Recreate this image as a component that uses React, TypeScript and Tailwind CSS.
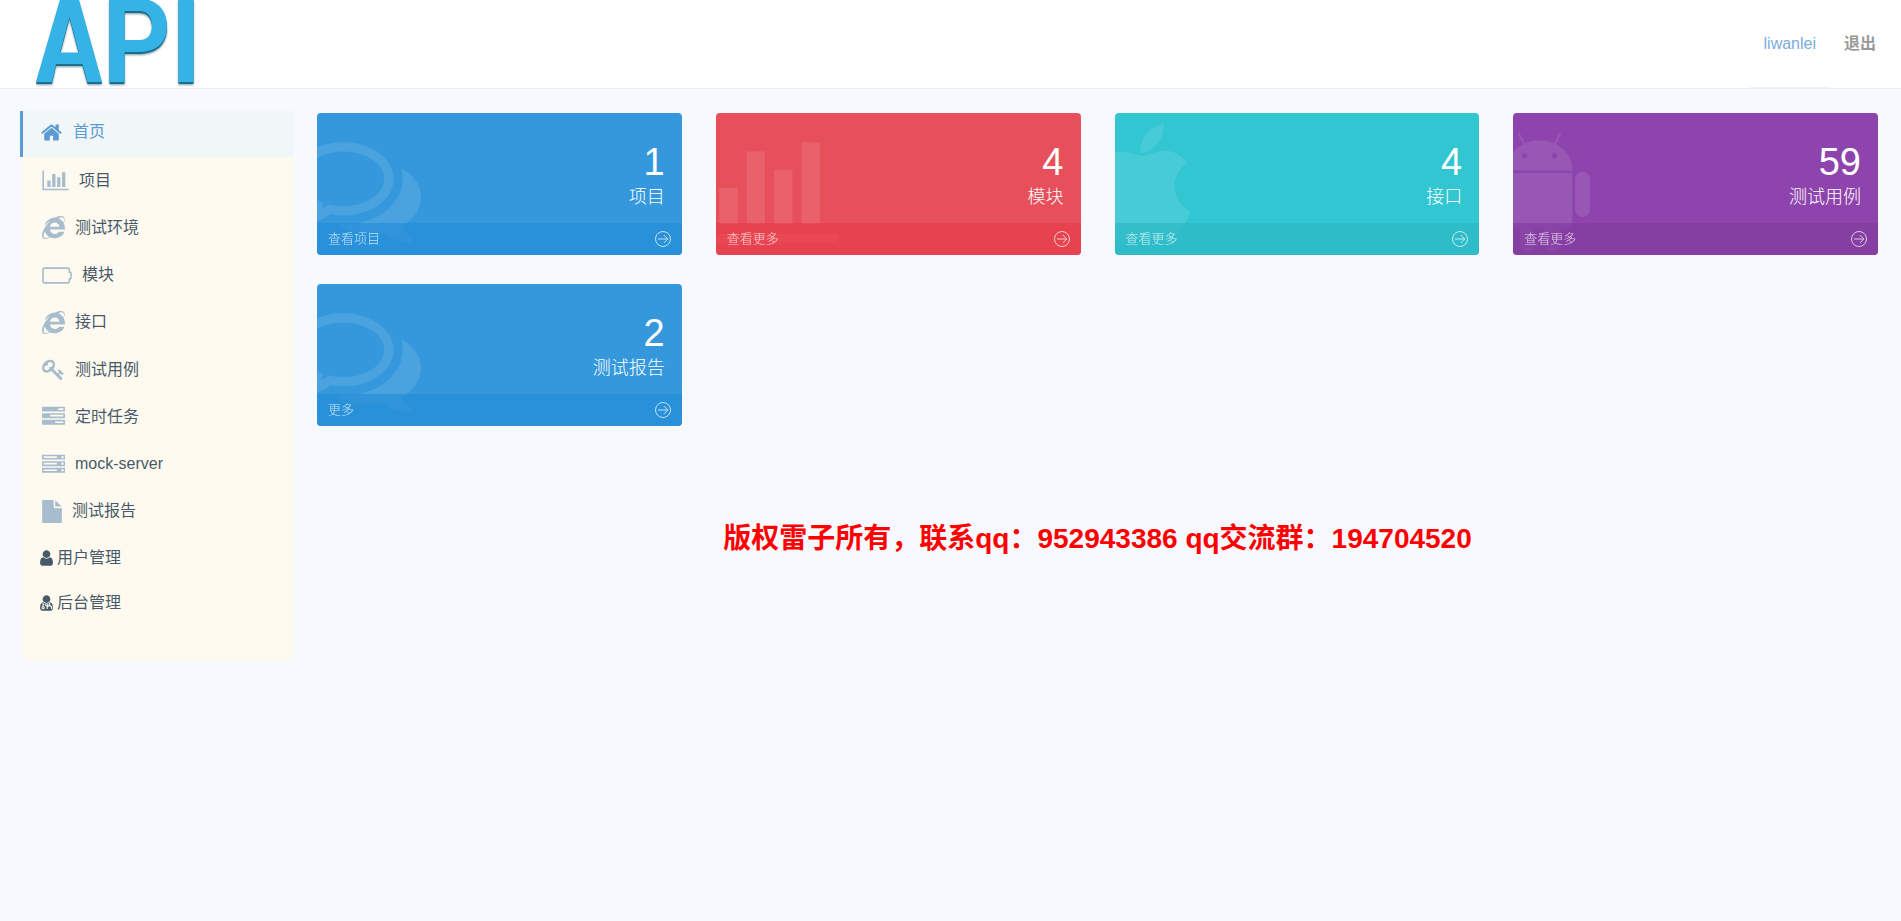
import type { ReactNode } from "react";
import { FaInternetExplorer } from "react-icons/fa";

type GlyphProps = { d: string; box: string; className: string };

function Glyph({ d, box, className }: GlyphProps) {
  return (
    <svg viewBox={box} className={className} fill="currentColor" aria-hidden="true">
      <path d={d} />
    </svg>
  );
}

const paths = {
  home: "M1472 992v480q0 26-19 45t-45 19h-384v-384h-256v384h-384q-26 0-45-19t-19-45v-480q0-1 .5-3t.5-3l575-474 575 474q1 2 1 6zm223-69l-62 74q-8 9-21 11h-3q-13 0-21-7l-692-577-692 577q-12 8-24 7-13-2-21-11l-62-74q-8-10-7-23.5t11-21.5l719-599q32-26 76-26t76 26l244 204v-195q0-14 9-23t23-9h192q14 0 23 9t9 23v408l219 182q10 8 11 21.5t-7 23.5z",
  chart: "M640 896v512h-256v-512h256zm384-512v1024h-256v-1024h256zm1024 1152v128h-2048v-1536h128v1408h1920zm-640-896v768h-256v-768h256zm384-384v1152h-256v-1152h256z",
  battery: "M2176 576q53 0 90.5 37.5t37.5 90.5v384q0 53-37.5 90.5t-90.5 37.5v160q0 66-47 113t-113 47h-1856q-66 0-113-47t-47-113v-960q0-66 47-113t113-47h1856q66 0 113 47t47 113v160zm0 512v-384h-128v-288q0-14-9-23t-23-9h-1856q-14 0-23 9t-9 23v960q0 14 9 23t23 9h1856q14 0 23-9t9-23v-288h128z",
  key: "M832 512q0-80-56-136t-136-56-136 56-56 136q0 42 19 83-41-19-83-19-80 0-136 56t-56 136 56 136 136 56 136-56 56-136q0-42-19-83 41 19 83 19 80 0 136-56t56-136zm851 704q0 17-49 66t-66 49q-9 0-28.5-16t-36.5-33-38.5-40-24.5-26l-96 96 220 220q28 28 28 68 0 42-39 81t-81 39q-40 0-68-28l-671-671q-176 131-365 131-163 0-265.5-102.5t-102.5-265.5q0-160 95-313t248-248 313-95q163 0 265.5 102.5t102.5 265.5q0 189-131 365l355 355 96-96q-3-3-26-24.5t-40-38.5-33-36.5-16-28.5q0-17 49-66t66-49q13 0 23 10 6 6 46 44.5t82 79.5 86.5 86 73 78 28.5 41z",
  tasks: "M1024 1408h640v-128h-640v128zm-384-512h1024v-128h-1024v128zm640-512h384v-128h-384v128zm512 832v256q0 26-19 45t-45 19h-1664q-26 0-45-19t-19-45v-256q0-26 19-45t45-19h1664q26 0 45 19t19 45zm0-512v256q0 26-19 45t-45 19h-1664q-26 0-45-19t-19-45v-256q0-26 19-45t45-19h1664q26 0 45 19t19 45zm0-512v256q0 26-19 45t-45 19h-1664q-26 0-45-19t-19-45v-256q0-26 19-45t45-19h1664q26 0 45 19t19 45z",
  server: "M128 1408h1024v-128h-1024v128zm0-512h1024v-128h-1024v128zm1568 448q0-40-28-68t-68-28-68 28-28 68 28 68 68 28 68-28 28-68zm-1568-960h1024v-128h-1024v128zm1568 448q0-40-28-68t-68-28-68 28-28 68 28 68 68 28 68-28 28-68zm0-512q0-40-28-68t-68-28-68 28-28 68 28 68 68 28 68-28 28-68zm96 832v384h-1792v-384h1792zm0-512v384h-1792v-384h1792zm0-512v384h-1792v-384h1792z",
  file: "M1152 512v-472q22 14 36 28l408 408q14 14 28 36h-472zm-128 32q0 40 28 68t68 28h544v1056q0 40-28 68t-68 28h-1344q-40 0-68-28t-28-68v-1600q0-40 28-68t68-28h800v544z",
  user: "M1536 1399q0 109-62.5 187t-150.5 78h-854q-88 0-150.5-78t-62.5-187q0-85 8.5-160.5t31.5-152 58.5-131 94-89 134.5-34.5q131 128 313 128t313-128q76 0 134.5 34.5t94 89 58.5 131 31.5 152 8.5 160.5zm-256-887q0 159-112.5 271.5t-271.5 112.5-271.5-112.5-112.5-271.5 112.5-271.5 271.5-112.5 271.5 112.5 112.5 271.5z",
  comments: "M704 384q-153 0-286 52t-211.5 141-78.5 191q0 82 53 158t149 132l97 56-35 84q34-20 62-39l44-31 53 10q78 14 153 14 153 0 286-52t211.5-141 78.5-191-78.5-191-211.5-141-286-52zm0-128q191 0 353.5 68.5t256.5 186.5 94 257-94 257-256.5 186.5-353.5 68.5q-86 0-176-16-124 88-278 128-36 9-86 16h-3q-11 0-20.5-8t-11.5-21q-1-3-1-6.5t.5-6.5 2-6l2.5-5 3.5-5.5 4-5 4.5-5 4-4.5q5-6 23-25t26-29.5 22.5-29 25-38.5 20.5-44q-124-72-195-177t-71-224q0-139 94-257t256.5-186.5 353.5-68.5zm822 1169q10 24 20.5 44t25 38.5 22.5 29 26 29.5 23 25q1 1 4 4.5t4.5 5 4 5 3.5 5.5l2.5 5 2 6 .5 6.5-1 6.5q-3 14-13 22t-22 7q-50-7-86-16-154-40-278-128-90 16-176 16-271 0-472-132 58 4 88 4 161 0 309-45t264-129q125-92 192-212t67-254q0-77-23-152 129 71 204 178t75 230q0 120-71 224.5t-195 176.5z",
  apple: "M1585 1215q-39 125-123 250-129 196-257 196-49 0-140-32-86-32-151-32-61 0-142 33-81 34-132 34-152 0-301-259-147-261-147-503 0-228 113-374 113-144 284-144 72 0 177 30 104 30 138 30 45 0 143-34 102-34 173-34 119 0 213 65 52 36 104 100-79 67-114 118-65 94-65 207 0 124 69 223t158 126zm-376-1173q0 61-29 136-30 75-93 138-54 54-108 72-37 11-104 17 3-149 78-257 74-107 250-148 1 3 2.5 11t2.5 11q0 4 .5 10t.5 10z",
  android: "M685 483q16 0 27.5-11.5t11.5-27.5-11.5-27.5-27.5-11.5-27 11.5-11 27.5 11 27.5 27 11.5zm422 0q16 0 27-11.5t11-27.5-11-27.5-27-11.5-27.5 11.5-11.5 27.5 11.5 27.5 27.5 11.5zm-812 184q42 0 72 30t30 72v430q0 43-29.5 73t-72.5 30-73-30-30-73v-430q0-42 30-72t73-30zm1060 19v666q0 46-32 78t-77 32h-75v227q0 43-30 73t-73 30-73-30-30-73v-227h-138v227q0 43-30 73t-73 30q-42 0-72-30t-30-73l-1-227h-74q-46 0-78-32t-32-78v-666h918zm-232-405q107 55 171 153.5t64 215.5h-925q0-117 64-215.5t172-153.5l-71-131q-7-13 5-20 13-6 20 6l72 132q95-42 201-42t201 42l72-132q7-12 20-6 12 7 5 20zm477 488v430q0 43-30 73t-73 30q-42 0-72-30t-30-73v-430q0-43 30-72.5t72-29.5q43 0 73 29.5t30 72.5z",
};

function DoctorGlyph() {
  return (
    <svg viewBox="256 0 1280 1792" className="h-[18px] w-[13px]" aria-hidden="true">
      <path fill="currentColor" d={paths.user} />
      <g fill="none" stroke="#fffaf0" strokeWidth="110">
        <path d="M560 900v320M1200 900v220M960 1500v-130q0-210 220-210t220 210v130M720 1000l176 160 176-160" />
        <circle cx="560" cy="1360" r="110" />
      </g>
    </svg>
  );
}

const menu: { label: string; icon: ReactNode }[] = [
  { label: "项目", icon: <Glyph d={paths.chart} box="0 0 2048 1792" className="h-[23px] w-[27px]" /> },
  { label: "测试环境", icon: <FaInternetExplorer className="size-[23px]" /> },
  { label: "模块", icon: <Glyph d={paths.battery} box="0 0 2304 1792" className="h-[23px] w-[30px]" /> },
  { label: "接口", icon: <FaInternetExplorer className="size-[23px]" /> },
  { label: "测试用例", icon: <Glyph d={paths.key} box="0 0 1792 1792" className="size-[23px]" /> },
  { label: "定时任务", icon: <Glyph d={paths.tasks} box="0 0 1792 1792" className="size-[23px]" /> },
  { label: "mock-server", icon: <Glyph d={paths.server} box="0 0 1792 1792" className="size-[23px]" /> },
  { label: "测试报告", icon: <Glyph d={paths.file} box="128 0 1536 1792" className="h-[23px] w-5" /> },
];

const cards = [
  { value: 1, label: "项目", more: "查看项目", color: "bg-[#3598dc]", foot: "bg-[#258fd7]", icon: paths.comments, box: "0 0 1792 1792", size: "w-32" },
  { value: 4, label: "模块", more: "查看更多", color: "bg-[#e7505a]", foot: "bg-[#e73d4a]", icon: paths.chart, box: "0 0 2048 1792", size: "w-[146px]" },
  { value: 4, label: "接口", more: "查看更多", color: "bg-[#32c5d2]", foot: "bg-[#2bb8c4]", icon: paths.apple, box: "192 0 1408 1792", size: "w-[101px]" },
  { value: 59, label: "测试用例", more: "查看更多", color: "bg-[#8e44ad]", foot: "bg-[#823e9e]", icon: paths.android, box: "192 0 1408 1792", size: "w-[101px]" },
  { value: 2, label: "测试报告", more: "更多", color: "bg-[#3598dc]", foot: "bg-[#258fd7]", icon: paths.comments, box: "0 0 1792 1792", size: "w-32" },
];

function StatCard({ card }: { card: (typeof cards)[number] }) {
  return (
    <a href="#" className={`relative block overflow-hidden rounded-[4px] text-white ${card.color}`}>
      <Glyph d={card.icon} box={card.box} className={`absolute top-[11px] -left-6 h-32 opacity-10 ${card.size}`} />
      <div className="flex h-[110px] flex-col items-end pt-[31px] pr-[17px]">
        <span className="text-[38px] leading-9">{card.value}</span>
        <span className="text-lg leading-[34px] font-light">{card.label}</span>
      </div>
      <div className={`relative flex h-8 items-center justify-between px-[11px] text-[13px] font-light opacity-70 ${card.foot}`}>
        <span>{card.more}</span>
        <svg viewBox="0 0 16 16" className="size-4" fill="none" stroke="currentColor" aria-hidden="true">
          <circle cx="8" cy="8" r="7.5" />
          <path d="M3 8h9.5M8.8 4l4 4-4 4" />
        </svg>
      </div>
    </a>
  );
}

function LogoShapes() {
  return (
    <>
      <path d="M24.500-2H42.500L66 82H51.500L46.500 64H20L16 82H0ZM33.500 17 24 52.500H43Z" />
      <path d="M73.500-2H100C120-2 131 9 131 26S120 52 103 52H88.500V82H73.500ZM88.500 11V40H103C112 40 116 34 116 25.500S112 11 103 11Z" />
      <path d="M142.500-2H157.500V82H142.500Z" />
    </>
  );
}

function Logo() {
  return (
    <svg viewBox="0 0 160 88" className="h-[88px] w-40" role="img" aria-label="API">
      <defs>
        <filter id="soft" x="-5%" y="-5%" width="110%" height="115%">
          <feGaussianBlur stdDeviation="0.900" />
        </filter>
      </defs>
      <g fillRule="evenodd">
        <g fill="#7f9aa5" transform="translate(0 3)" filter="url(#soft)">
          <LogoShapes />
        </g>
        <g fill="#1c6f8c" transform="translate(0 2)">
          <LogoShapes />
        </g>
        <g fill="#35b3e6">
          <LogoShapes />
        </g>
      </g>
    </svg>
  );
}

export default function App() {
  return (
    <div className="min-h-screen bg-[#f8f9ff] font-['Liberation_Sans','Noto_Sans_CJK_SC',sans-serif] text-base text-[#485a6a]">
      <header className="flex items-start justify-between border-b border-[#e7ebf3] bg-white pr-[25px] pl-9">
        <a href="#"><Logo /></a>
        <nav className="flex h-[88px] items-center">
          <a href="#" className="flex h-[88px] items-center border-b border-[#eff2f8] px-3.5 text-[#7cacdc]">liwanlei</a>
          <a href="#" className="pl-3.5 font-bold text-[#999]">退出</a>
        </nav>
      </header>

      <div className="flex items-start pt-[22px] pr-[23px] pl-[23px]">
        <nav className="w-[271px] shrink-0 rounded-lg bg-[#fffaf0] pb-9">
          <a href="#" className="-ml-[3px] flex h-[46px] items-center gap-[11px] border-l-3 border-[#5b9bd1] bg-[#f1f6f9] pb-1 pl-[18px] text-[#5b9bd1]">
            <Glyph d={paths.home} box="64 0 1664 1792" className="h-[23px] w-[21px]" />
            首页
          </a>
          <div className="grid h-[378px] auto-rows-fr">
            {menu.map((item) => (
              <a key={item.label} href="#" className="flex items-center gap-2.5 pl-[19px]">
                <span className="text-[#a7bdcd]">{item.icon}</span>
                {item.label}
              </a>
            ))}
          </div>
          <a href="#" className="flex h-[45px] items-center gap-1 pl-[17px]">
            <Glyph d={paths.user} box="256 0 1280 1792" className="h-[18px] w-[13px]" />
            用户管理
          </a>
          <a href="#" className="flex h-[45px] items-center gap-1 pl-[17px]">
            <DoctorGlyph />
            后台管理
          </a>
        </nav>

        <main className="ml-[23px] flex-1 pt-0.5">
          <div className="grid grid-cols-4 gap-x-[34px] gap-y-[29px]">
            {cards.map((card, i) => (
              <StatCard key={i} card={card} />
            ))}
          </div>
          <p className="mt-[93px] text-center text-[28px] leading-10 font-bold text-[red]">
            版权雷子所有，联系qq：952943386 qq交流群：194704520
          </p>
        </main>
      </div>
    </div>
  );
}
